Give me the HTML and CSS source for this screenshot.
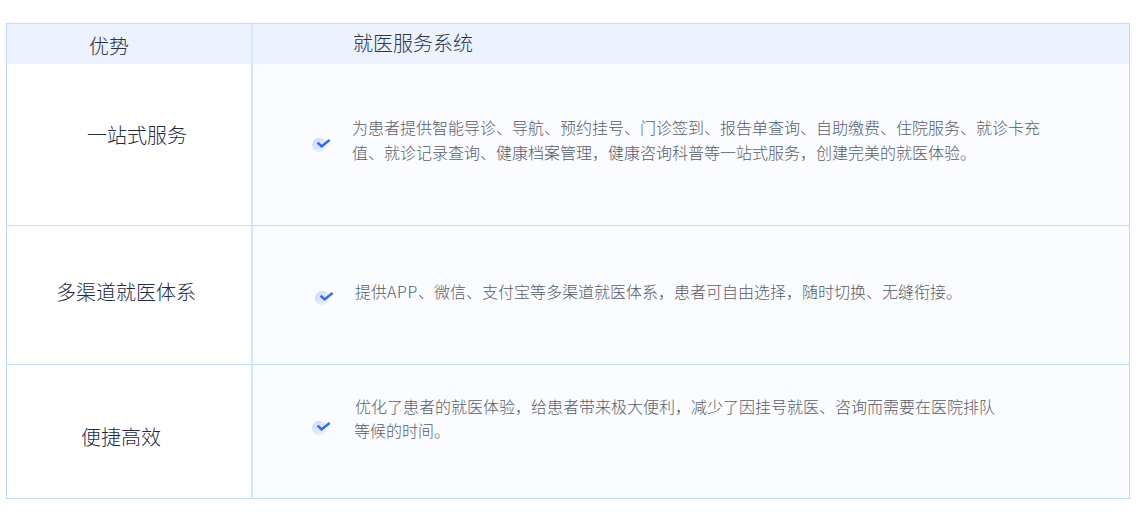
FILE: index.html
```html
<!DOCTYPE html>
<html lang="zh-CN">
<head>
<meta charset="utf-8">
<title>就医服务系统优势</title>
<link rel="stylesheet" href="styles.css">
</head>
<body>
<svg class="defs" width="0" height="0" aria-hidden="true">
  <defs>
    <linearGradient id="disc" x1="0" y1="0" x2="1" y2="1">
      <stop offset="0" stop-color="#c9d7fb"/>
      <stop offset="1" stop-color="#f1f5fe"/>
    </linearGradient>
    <symbol id="check" viewBox="0 0 19 16">
      <circle cx="7.2" cy="8" r="7.2" fill="url(#disc)"/>
      <path d="M5.6 5.6 L9.6 9.4 L17.6 3" fill="none" stroke="#2f6bf2" stroke-width="2.5" stroke-linejoin="miter"/>
    </symbol>
  </defs>
</svg>
<main class="table">
  <div class="row head">
    <div class="cell-left"><span class="head-left">优势</span></div>
    <div class="cell-right"><span class="head-right">就医服务系统</span></div>
  </div>
  <div class="row r1">
    <div class="cell-left"><span class="name">一站式服务</span></div>
    <div class="cell-right">
      <svg class="tick" width="19" height="16"><use href="#check"/></svg>
      <p class="desc">为患者提供智能导诊、导航、预约挂号、门诊签到、报告单查询、自助缴费、住院服务、就诊卡充值、就诊记录查询、健康档案管理，健康咨询科普等一站式服务，创建完美的就医体验。</p>
    </div>
  </div>
  <div class="row r2">
    <div class="cell-left"><span class="name">多渠道就医体系</span></div>
    <div class="cell-right">
      <svg class="tick" width="19" height="16"><use href="#check"/></svg>
      <p class="desc">提供<span class="latin">APP</span>、微信、支付宝等多渠道就医体系，患者可自由选择，随时切换、无缝衔接。</p>
    </div>
  </div>
  <div class="row r3">
    <div class="cell-left"><span class="name">便捷高效</span></div>
    <div class="cell-right">
      <svg class="tick" width="19" height="16"><use href="#check"/></svg>
      <p class="desc">优化了患者的就医体验，给患者带来极大便利，减少了因挂号就医、咨询而需要在医院排队<span class="tail">等候的时间。</span></p>
    </div>
  </div>
</main>
</body>
</html>
```
FILE: styles.css
```css
* { box-sizing: border-box; }
html, body { margin: 0; padding: 0; background: #fff; }
body {
  padding: 23px 17px 0 6px;
  font-family: "Noto Sans CJK SC", "Noto Sans", sans-serif;
}
.defs { position: absolute; }
.table {
  position: relative;
  width: 1124px;
  border: 1px solid #b9dbff;
}
.table::after {
  content: "";
  position: absolute;
  left: 244px;
  top: 0;
  bottom: -2px;
  width: 2px;
  background: #d3e6ff;
}
.row {
  display: grid;
  grid-template-columns: 245px 1fr;
}
.row + .row + .row { border-top: 1px solid #bddcff; }
.cell-left { background: #fff; }
.cell-right { background: #fbfcff; display: flex; align-items: flex-start; }
.head { height: 40px; }
.head .cell-left, .head .cell-right { background: #ecf2fe; }
.head-left, .head-right { font-size: 20px; font-weight: 300; line-height: 40px; color: #2b3346; display: block; }
.head-left { padding-left: 82px; position: relative; top: 2px; }
.head-right { padding-left: 101px; position: relative; top: -1px; }
.name { display: block; font-size: 20px; font-weight: 300; line-height: 30px; color: #232b3e; }
.desc { margin: 0; font-size: 16px; font-weight: 300; line-height: 25px; color: #575c69; }
.latin { letter-spacing: 0.7px; }
.tail { margin-left: -1px; }
.tick { flex: none; }
.r1 { height: 161px; }
.r1 .name { padding: 56px 0 0 80px; }
.r1 .tick { margin: 73px 0 0 60px; }
.r1 .desc { margin: 51px 0 0 21px; width: 700px; }
.r2 { height: 139px; }
.r2 .name { padding: 51px 0 0 49px; }
.r2 .tick { margin: 64px 0 0 63px; }
.r2 .desc { margin: 53px 0 0 21px; width: 700px; }
.r3 { height: 134px; }
.r3 .name { padding: 57px 0 0 74px; }
.r3 .tick { margin: 55px 0 0 60px; }
.r3 .desc { margin: 30px 0 0 24px; width: 650px; line-height: 23.5px; }
```
